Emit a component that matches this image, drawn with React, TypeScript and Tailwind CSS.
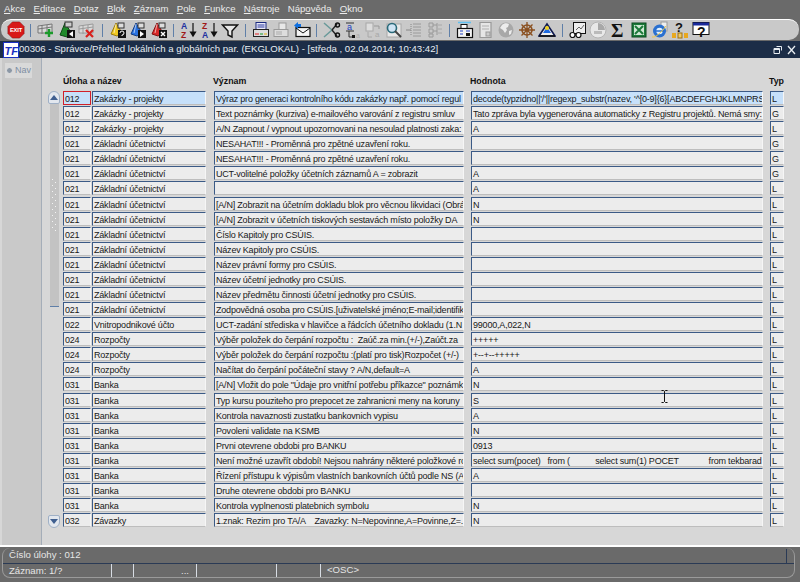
import React from "react";

type Row = { code: string; name: string; meaning: string; value: string; typ: string };

const ZU = "Základní účetnictví";
const ZP = "Zakázky - projekty";

const ROWS: Row[] = [
  { code: "012", name: ZP, meaning: "Výraz pro generaci kontrolního kódu zakázky např. pomocí regul", value: "decode(typzidno||'/'||regexp_substr(nazev, '^[0-9]{6}[ABCDEFGHJKLMNPRST", typ: "L" },
  { code: "012", name: ZP, meaning: "Text poznámky (kurziva) e-mailového varování z registru smluv", value: "Tato zpráva byla vygenerována automaticky z Registru projektů. Nemá smy:", typ: "G" },
  { code: "012", name: ZP, meaning: "A/N Zapnout / vypnout upozornovani na nesoulad platnosti zaka:", value: "A", typ: "L" },
  { code: "021", name: ZU, meaning: "NESAHAT!!! - Proměnná pro zpětné uzavření roku.", value: "", typ: "G" },
  { code: "021", name: ZU, meaning: "NESAHAT!!! - Proměnná pro zpětné uzavření roku.", value: "", typ: "G" },
  { code: "021", name: ZU, meaning: "UCT-volitelné položky účetních záznamů A = zobrazit", value: "A", typ: "G" },
  { code: "021", name: ZU, meaning: "", value: "A", typ: "L" },
  { code: "021", name: ZU, meaning: "[A/N] Zobrazit na účetním dokladu blok pro věcnou likvidaci (Obrá", value: "N", typ: "L" },
  { code: "021", name: ZU, meaning: "[A/N] Zobrazit v účetních tiskových sestavách místo položky DA", value: "N", typ: "L" },
  { code: "021", name: ZU, meaning: "Číslo Kapitoly pro CSÚIS.", value: "", typ: "L" },
  { code: "021", name: ZU, meaning: "Název Kapitoly pro CSÚIS.", value: "", typ: "L" },
  { code: "021", name: ZU, meaning: "Název právní formy pro CSÚIS.", value: "", typ: "L" },
  { code: "021", name: ZU, meaning: "Název účetní jednotky pro CSÚIS.", value: "", typ: "L" },
  { code: "021", name: ZU, meaning: "Název předmětu činnosti účetní jednotky pro CSÚIS.", value: "", typ: "L" },
  { code: "021", name: ZU, meaning: "Zodpovědná osoba pro CSÚIS.[uživatelské jméno;E-mail;identifike", value: "", typ: "L" },
  { code: "022", name: "Vnitropodnikové účto", meaning: "UCT-zadání střediska v hlavičce a řádcích účetního dokladu (1.N", value: "99000,A,022,N", typ: "L" },
  { code: "024", name: "Rozpočty", meaning: "Výběr položek do čerpání rozpočtu :  Zaúč.za min.(+/-),Zaúčt.za", value: "+++++", typ: "L" },
  { code: "024", name: "Rozpočty", meaning: "Výběr položek do čerpání rozpočtu :(platí pro tisk)Rozpočet (+/-)", value: "+--+--+++++", typ: "L" },
  { code: "024", name: "Rozpočty", meaning: "Načítat do čerpání počáteční stavy ? A/N,default=A", value: "A", typ: "L" },
  { code: "031", name: "Banka", meaning: "[A/N] Vložit do pole \"Údaje pro vnitřní potřebu příkazce\" poznámk", value: "N", typ: "L" },
  { code: "031", name: "Banka", meaning: "Typ kursu pouziteho pro prepocet ze zahranicni meny na koruny", value: "S", typ: "L" },
  { code: "031", name: "Banka", meaning: "Kontrola navaznosti zustatku bankovnich vypisu", value: "A", typ: "L" },
  { code: "031", name: "Banka", meaning: "Povoleni validate na KSMB", value: "N", typ: "L" },
  { code: "031", name: "Banka", meaning: "Prvni otevrene obdobi pro BANKU", value: "0913", typ: "L" },
  { code: "031", name: "Banka", meaning: "Není možné uzavřít období! Nejsou nahrány některé položkové ro", value: "select sum(pocet)   from (           select sum(1) POCET             from tekbarad", typ: "L" },
  { code: "031", name: "Banka", meaning: "Řízení přístupu k výpisům vlastních bankovních účtů podle NS (A", value: "A", typ: "L" },
  { code: "031", name: "Banka", meaning: "Druhe otevrene obdobi pro BANKU", value: "", typ: "L" },
  { code: "031", name: "Banka", meaning: "Kontrola vyplnenosti platebnich symbolu", value: "N", typ: "L" },
  { code: "032", name: "Závazky", meaning: "1.znak: Rezim pro TA/A    Zavazky: N=Nepovinne,A=Povinne,Z=.", value: "N", typ: "L" },
];

// label split around the underlined mnemonic letter
const MENU: [string, string, string][] = [
  ["", "A", "kce"],
  ["", "E", "ditace"],
  ["", "D", "otaz"],
  ["", "B", "lok"],
  ["", "Z", "áznam"],
  ["", "P", "ole"],
  ["", "F", "unkce"],
  ["", "N", "ástroje"],
  ["Náp", "o", "věda"],
  ["", "O", "kno"],
];

function Ico({ children }: { children: React.ReactNode }) {
  return (
    <svg viewBox="0 0 18 18" className="w-[18px] h-[18px] shrink-0">
      {children}
    </svg>
  );
}

const Sep = () => <div className="w-px h-[13px] mx-[5.75px] bg-[#5f7fa8] shrink-0" />;

function Sheet({ gray }: { gray?: boolean }) {
  const c = gray ? "#9a9a9a" : "#777";
  return (
    <>
      <path d="M1 5l14-2v9H1z" fill="#d8d8d8" stroke={c} />
      <path d="M1 8l14-2M5 4v9M10 4v8" stroke={c} fill="none" />
    </>
  );
}

function Cone({ color, dark, glyph }: { color: string; dark: string; glyph: React.ReactNode }) {
  return (
    <>
      <path d="M7 2L2 13l6 2 5-3z" fill={color} stroke={dark} />
      <path d="M7 3l-2 9" stroke="#fff" strokeOpacity="0.6" />
      <rect x="9" y="2" width="6" height="5" fill="#ddd" stroke="#333" />
      <rect x="9" y="9" width="8" height="8" fill="#111" />
      {glyph}
    </>
  );
}

const GROUPS: React.ReactNode[][] = [
  [
    <Ico key="1"><Sheet /><path d="M12 8v8M8 12h8" stroke="#1a9a2a" strokeWidth="2.4" /></Ico>,
    <Ico key="2"><path d="M7 2L2 14l7 2 5-3z" fill="#1f8a2a" stroke="#0c4a14" /><rect x="7" y="1" width="7" height="5" fill="#ccc" stroke="#333" /><rect x="9" y="9" width="8" height="8" fill="#111" /><path d="M15 10l-4 3 4 3z" fill="#fff" /></Ico>,
    <Ico key="3"><Sheet gray /><path d="M8 9l7 7M15 9l-7 7" stroke="#d8201c" strokeWidth="2.2" /></Ico>,
  ],
  [
    <Ico key="1"><Cone color="#f0c820" dark="#9a7a10" glyph={<path d="M11 12a2 2 0 1 1 2 2v1" stroke="#fff" fill="none" />} /></Ico>,
    <Ico key="2"><Cone color="#2a72e0" dark="#123a80" glyph={<path d="M11 10l4 3-4 3z" fill="#fff" />} /></Ico>,
    <Ico key="3"><Cone color="#d82a2a" dark="#801010" glyph={<path d="M11 11l4 4M15 11l-4 4" stroke="#fff" strokeWidth="1.4" />} /></Ico>,
  ],
  [
    <Ico key="1">
      <text x="1" y="8" fontSize="8.5" fontWeight="700" fontFamily="Liberation Sans" fill="#2030a0">A</text>
      <text x="1" y="16.5" fontSize="8.5" fontWeight="700" fontFamily="Liberation Sans" fill="#a01818">Z</text>
      <path d="M13 2v12M10.5 11l2.5 4 2.5-4z" stroke="#111" fill="#111" strokeWidth="1.2" />
    </Ico>,
    <Ico key="2">
      <text x="1" y="8" fontSize="8.5" fontWeight="700" fontFamily="Liberation Sans" fill="#a01818">Z</text>
      <text x="1" y="16.5" fontSize="8.5" fontWeight="700" fontFamily="Liberation Sans" fill="#2030a0">A</text>
      <path d="M13 2v12M10.5 11l2.5 4 2.5-4z" stroke="#111" fill="#111" strokeWidth="1.2" />
    </Ico>,
    <Ico key="3"><path d="M1.5 4h15L11 10v6l-4-2v-4z" fill="#e8e8e8" stroke="#111" strokeWidth="1.4" /></Ico>,
  ],
  [
    <Ico key="1"><rect x="4" y="1.5" width="10" height="7" fill="#e8e8f8" stroke="#1a2a80" /><path d="M5.5 4h7M5.5 6h7" stroke="#2a3aa0" /><rect x="1.5" y="8.5" width="15" height="7" fill="#ddd" stroke="#222" /><path d="M3 13h4" stroke="#e02020" /><path d="M8 13h3" stroke="#1a9a2a" /><path d="M12 13h3" stroke="#e0b010" /></Ico>,
    <Ico key="2"><rect x="7" y="2" width="7" height="7" fill="#e8e8e8" stroke="#999" /><rect x="2" y="8.5" width="14" height="7" fill="#ddd" stroke="#999" /><path d="M4 11h6M4 13h6" stroke="#aaa" /></Ico>,
    <Ico key="3"><rect x="3" y="6.5" width="14" height="9" fill="#f4f4f4" stroke="#111" strokeWidth="1.2" /><path d="M3 7l7 5 7-5" fill="none" stroke="#111" /><path d="M5 1L1 4.5 5 8V6h3V3H5z" fill="#1070e0" /></Ico>,
  ],
  [
    <Ico key="1"><path d="M1 2l8 7-8 7" fill="none" stroke="#6a9a9a" strokeWidth="1.5" /><path d="M9 9l5-6" stroke="#222" strokeWidth="1.4" /><path d="M9 9l5 6" stroke="#222" strokeWidth="1.4" /><circle cx="14.5" cy="4" r="2" fill="none" stroke="#111" strokeWidth="1.4" /><circle cx="14.5" cy="14" r="2" fill="none" stroke="#111" strokeWidth="1.4" /></Ico>,
    <Ico key="2"><text x="3" y="9" fontSize="9" fontFamily="Liberation Sans" fill="#1a40c0">a</text><path d="M2 2h8M2 10h8M5 10v6h4" stroke="#333" fill="none" /><rect x="8" y="14" width="3" height="3" fill="#111" /><text x="12" y="17" fontSize="7" fontFamily="Liberation Sans" fill="#aaa">a</text></Ico>,
    <Ico key="3"><rect x="2" y="2" width="7" height="8" fill="#ddd" stroke="#a8a8a8" /><path d="M10 5h5v3" stroke="#999" fill="none" /><text x="11" y="16" fontSize="8" fontFamily="Liberation Sans" fill="#a8a8a8">a</text><path d="M4 11v5h4" stroke="#a8a8a8" fill="none" /></Ico>,
    <Ico key="4"><rect x="2" y="3" width="14" height="13" fill="#e8e8e8" stroke="#a8a8a8" /><circle cx="7" cy="7" r="4.5" fill="#cfe4f4" stroke="#2a6a7a" strokeWidth="1.6" /><path d="M10 10l6 6" stroke="#444" strokeWidth="2" /></Ico>,
    <Ico key="5"><path d="M6 3v12" stroke="#888" strokeDasharray="1 1" /><path d="M1 9h5" stroke="#888" /><path d="M8 3h8M8 6h8M8 9h8M8 12h8M8 15h8" stroke="#9a9a9a" /></Ico>,
    <Ico key="6"><path d="M3 2h4v4H3zM3 8h4v4H3zM3 13h4v3H3z" fill="#c8c8c8" stroke="#9a9a9a" /><path d="M7 4h4M7 10h4M11 2v12" stroke="#9a9a9a" fill="none" /><path d="M12 4h4M12 8h4M12 12h4" stroke="#a8a8a8" /></Ico>,
  ],
  [
    <Ico key="1"><path d="M2 1.5h13" stroke="#60c0f0" strokeWidth="1.5" /><rect x="5" y="3.5" width="6" height="4" fill="#fff" stroke="#111" /><rect x="1.5" y="7.5" width="15" height="9" fill="#f4f4f4" stroke="#111" strokeWidth="1.2" /><path d="M4 10h3M10 10h4M4 13h3" stroke="#2040c0" /><rect x="10" y="12" width="4" height="3" fill="#111" /></Ico>,
    <Ico key="2"><path d="M3 1.5h11v15H3z" fill="#e6e6e6" stroke="#999" strokeWidth="1.2" /><path d="M5 5h7M5 8h7" stroke="#b0b0b0" /><rect x="9" y="11" width="4" height="4" fill="#ccc" stroke="#999" /></Ico>,
    <Ico key="3"><circle cx="9" cy="9" r="7.5" fill="#a8a8a8" /><path d="M5 4c2-2 5-2 7-1l-1 3-2 1 1 2-2 3-2-3-3-2z" fill="#ececec" /><path d="M12 10l3-1-1 4-2 1z" fill="#ececec" /></Ico>,
    <Ico key="4"><circle cx="9" cy="9" r="5" fill="none" stroke="#8a5020" strokeWidth="1.6" /><circle cx="9" cy="9" r="1.8" fill="#8a5020" /><path d="M9 1v16M1 9h16M3.5 3.5l11 11M14.5 3.5l-11 11" stroke="#8a5020" strokeWidth="1.3" /></Ico>,
    <Ico key="5"><path d="M9 3L1 15h16z" fill="#f0f0f0" stroke="#101a50" strokeWidth="1.6" /><path d="M9 6l-4 6h8z" fill="#1e6ae0" /><circle cx="9" cy="7" r="2" fill="#f0d020" /><path d="M1 15h16" stroke="#111" strokeWidth="1.6" /></Ico>,
  ],
  [
    <Ico key="1"><rect x="4.5" y="1.5" width="12" height="11" fill="#eee" stroke="#111" /><path d="M7 9l3-3 2 2 3-4" stroke="#666" fill="none" /><circle cx="3.5" cy="14" r="2.5" fill="#fff" stroke="#111" strokeWidth="1.2" /><circle cx="9.5" cy="14" r="2.5" fill="#fff" stroke="#111" strokeWidth="1.2" /><path d="M6 14h1" stroke="#111" /></Ico>,
    <Ico key="2"><circle cx="9" cy="9" r="8" fill="#e8e8e8" stroke="#b4b4b4" /><path d="M9 2a7 7 0 0 1 7 7H9z" fill="#a8a8a8" /><rect x="5" y="10" width="8" height="3" fill="#bbb" /></Ico>,
    <Ico key="3"><text x="1" y="16" fontSize="19" fontFamily="Liberation Serif" fontWeight="700" fill="#111">Σ</text></Ico>,
    <Ico key="4"><rect x="2" y="2" width="14" height="14" fill="#1c7a3a" stroke="#0c4a20" /><rect x="4" y="4" width="10" height="10" fill="#cfe8d4" /><path d="M5 5l8 8M13 5l-8 8" stroke="#1c7a3a" strokeWidth="2" /></Ico>,
    <Ico key="5"><rect x="10" y="1" width="6" height="9" fill="#eee" stroke="#999" /><circle cx="8.5" cy="10" r="6.5" fill="#2a70d0" /><circle cx="8.5" cy="10" r="3.2" fill="#dff0ff" /><path d="M5 10h7" stroke="#2a70d0" strokeWidth="1.5" /><path d="M1 16c3 1 10-5 14-11" stroke="#f0c840" fill="none" /></Ico>,
    <Ico key="6"><text x="4" y="11" fontSize="13" fontWeight="700" fontFamily="Liberation Sans" fill="#111">?</text><rect x="1" y="12" width="4" height="5" fill="#e8a820" /><rect x="7" y="12" width="4" height="5" fill="#f0c860" stroke="#a07010" /><rect x="13" y="12" width="4" height="5" fill="#e8a820" /></Ico>,
    <Ico key="7"><rect x="1" y="1.5" width="16" height="12" fill="#fff" stroke="#111" /><rect x="1" y="1.5" width="16" height="3" fill="#1a2a9a" /><text x="5" y="16" fontSize="14" fontWeight="700" fontFamily="Liberation Sans" fill="#111">?</text></Ico>,
  ],
];

function Field({ text, width, selected, red }: { text: string; width: string; selected?: boolean; red?: boolean }) {
  const bg = selected ? "bg-[#c6e0fa]" : "bg-[#ececec]";
  const frame = red
    ? "border-[#d0202a]"
    : "border-t-[#3b5a86] border-l-[#3b5a86] border-r-[#f6f6f6] border-b-[#bdbdbd]";
  return (
    <div className={`${width} ${bg} ${frame} h-[14px] border shrink-0 pl-[1px] overflow-hidden whitespace-pre leading-[14px] text-[#181818]`}>
      {text}
    </div>
  );
}

function ScrollBtn({ down }: { down?: boolean }) {
  return (
    <div className={`w-[12px] h-[13px] bg-[#e2e7ee] border border-[#9fb0c6] flex items-center justify-center ${down ? "rounded-b-[6px] rounded-t-[2px]" : "rounded-t-[6px] rounded-b-[2px]"}`}>
      <svg viewBox="0 0 8 5" className="w-[8px] h-[5px]">
        <path d={down ? "M0 0h8L4 5z" : "M4 0l4 5H0z"} fill="#3f5f90" />
      </svg>
    </div>
  );
}

export default function App() {
  return (
    <div className="relative w-[800px] h-[582px] overflow-hidden bg-[#6a6a6a] font-['Liberation_Sans',sans-serif] text-[9px] tracking-[-0.2px]">
      {/* menu */}
      <div className="h-[19px] flex items-center gap-[8.2px] pl-[4px] text-[#ececec] text-[9.6px] tracking-normal">
        {MENU.map(([a, b, c]) => (
          <span key={a + b + c}>
            {a}
            <span className="underline">{b}</span>
            {c}
          </span>
        ))}
      </div>

      {/* toolbar */}
      <div className="h-[21px] mx-[1px] flex items-center rounded-[10px] bg-[#c9c9c9] border-t border-white">
        <div className="ml-[4px] shrink-0 w-[22px] flex justify-center">
          <svg viewBox="0 0 20 20" className="w-[18px] h-[18px]">
            <path d="M6 1h8l5 5v8l-5 5H6l-5-5V6z" fill="#d81818" stroke="#801010" strokeWidth="0.6" />
            <text x="10" y="12.5" textAnchor="middle" fontSize="6.4" fontWeight="700" fontFamily="Liberation Sans" fill="#fff">EXIT</text>
          </svg>
        </div>
        <div className="w-px h-[13px] ml-[3px] mr-[6px] bg-[#5f7fa8] shrink-0" />
        {GROUPS.map((g, i) => (
          <React.Fragment key={i}>
            {i > 0 && <Sep />}
            <div className="flex gap-[2.5px]">{g}</div>
          </React.Fragment>
        ))}
      </div>

      {/* window */}
      <div className="mt-[1px] h-[506px] flex flex-col bg-[#d7d7d7] border-b-2 border-white">
        <div className="h-[17px] shrink-0 flex items-center bg-[#1c2d47] text-[#e8edf2] text-[9.6px] tracking-normal">
          <svg viewBox="0 0 16 16" className="w-[16px] h-[16px] ml-[3px] shrink-0">
            <rect x="0.5" y="0.5" width="15" height="15" fill="#fff" stroke="#1a30c0" />
            <text x="1.5" y="12.5" fontSize="11" fontStyle="italic" fontWeight="700" fontFamily="Liberation Sans" fill="#1a30c0">TF</text>
          </svg>
          <span className="whitespace-pre flex-1">00306 - Správce/Přehled lokálních a globálních par. (EKGLOKAL) - [středa , 02.04.2014; 10:43:42]</span>
          <svg viewBox="0 0 24 10" className="w-[24px] h-[10px] mr-[3px] shrink-0" fill="none" stroke="#e8edf2">
            <path d="M3.5 1.5h5v4M1 3.5h5.5v5H1zM1 4.5h5.5" />
            <path d="M15 1l7 8M22 1l-7 8" strokeWidth="1.3" />
          </svg>
        </div>

        <div className="flex flex-1 min-h-0">
          {/* nav tab strip */}
          <div className="w-[40px] ml-[2px] shrink-0 bg-[#c9c9c9] border-r border-[#a4adb8] pt-[5px]">
            <div className="w-[27px] ml-[3px] h-[15px] bg-[#d9d9d9] flex items-center gap-[2px] pl-[1px] text-[#7d8ea3] text-[9px] tracking-normal">
              <span className="w-[7px] h-[7px] rounded-full bg-[#8c98a6] border border-[#e2e2e2] shrink-0" />
              Nav
            </div>
          </div>

          <div className="flex-1 pl-[5px] pt-[17px]">
            <div className="flex font-bold text-[#111] h-[16px] text-[8.8px] tracking-normal ml-[16px]">
              <div className="w-[150px]">Úloha a název</div>
              <div className="w-[257px]">Význam</div>
              <div className="w-[299px]">Hodnota</div>
              <div>Typ</div>
            </div>

            <div className="flex">
              {/* scroll bar */}
              <div className="w-[16px] shrink-0 flex flex-col items-center h-[437px] pr-[2px]">
                <ScrollBtn />
                <div className="w-[9px] h-[203px] bg-[#c3c3c3] border-b border-b-[#5f7fa8] flex items-center justify-center">
                  <svg viewBox="0 0 6 54" className="w-[6px] h-[54px]">
                    {[0, 1, 2, 3, 4, 5, 6, 7, 8].map((n) => (
                      <path key={n} d={`M1 ${n * 6 + 1}h1v1H1zM4 ${n * 6 + 4}h1v1H4z`} fill="#f4f4f4" />
                    ))}
                  </svg>
                </div>
                <div className="flex-1" />
                <ScrollBtn down />
              </div>

              {/* rows */}
              <div className="flex flex-col gap-[0.09px]">
                {ROWS.map((r, i) => (
                  <div key={i} className="flex h-[15px]">
                    <Field text={r.code} width="w-[28px]" selected={i === 0} red={i === 0} />
                    <Field text={r.name} width="w-[114px] ml-px" selected={i === 0} />
                    <Field text={r.meaning} width="w-[250px] ml-[8px]" selected={i === 0} />
                    <Field text={r.value} width="w-[292px] ml-[7px]" selected={i === 0} />
                    <Field text={r.typ} width="w-[14px] ml-[7px]" selected={i === 0} />
                  </div>
                ))}
              </div>
            </div>
          </div>
        </div>
      </div>

      {/* status */}
      <div className="mt-px h-[30px] mr-[5px] ml-[2px] rounded-[8px] border-l border-r border-b border-[#9a9a9a] text-[#e6e6e6] text-[9.6px] tracking-normal">
        <div className="h-[16px] flex items-center pl-[6px] border-b border-[#2a3a55]">
          <span className="flex-1">Číslo úlohy : 012</span>
          <span className="w-px h-[14px] bg-[#2a3a55] mr-[7px]" />
        </div>
        <div className="h-[13px] flex items-center">
          <div className="w-[109px] pl-[6px] h-full border-r border-[#d8dde4]">Záznam: 1/?</div>
          <div className="w-[22px] h-full border-r border-[#d8dde4]" />
          <div className="w-[63px] h-full border-r border-[#d8dde4] text-right pr-[7px]">...</div>
          <div className="w-[80px] h-full border-r border-[#d8dde4]" />
          <div className="w-[44px] h-full border-r border-[#d8dde4]" />
          <div className="pl-[6px]">&lt;OSC&gt;</div>
        </div>
      </div>

      {/* mouse cursor over the grid */}
      <svg viewBox="0 0 7 13" className="absolute left-[661px] top-[390px] w-[7px] h-[13px]" fill="none" stroke="#111">
        <path d="M0.5 0.5h2l1 1 1-1h2M3.5 1.5v10M0.5 12.5h2l1-1 1 1h2" />
      </svg>
    </div>
  );
}
